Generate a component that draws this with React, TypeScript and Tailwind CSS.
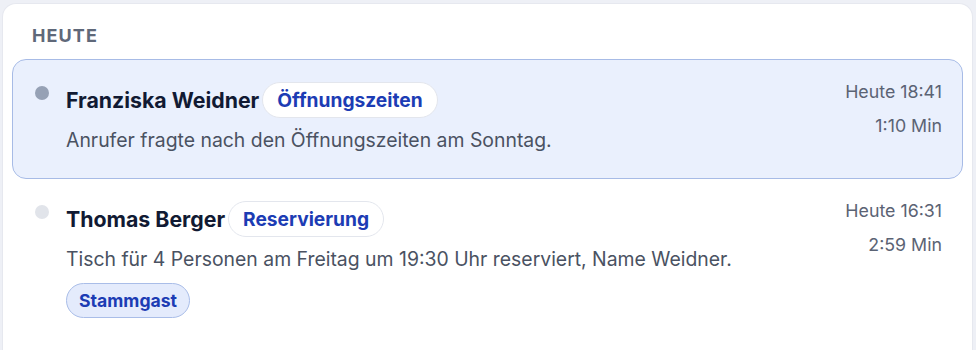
const calls = [
  {
    id: 1,
    name: "Franziska Weidner",
    topic: "Öffnungszeiten",
    summary: "Anrufer fragte nach den Öffnungszeiten am Sonntag.",
    time: "Heute 18:41",
    duration: "1:10 Min",
    tags: [] as string[],
    active: true,
  },
  {
    id: 2,
    name: "Thomas Berger",
    topic: "Reservierung",
    summary: "Tisch für 4 Personen am Freitag um 19:30 Uhr reserviert, Name Weidner.",
    time: "Heute 16:31",
    duration: "2:59 Min",
    tags: ["Stammgast"],
    active: false,
  },
];

export default function App() {
  return (
    <div className="flex h-screen flex-col bg-[#eef0f6] pl-[2px] pr-[3px] pt-[3px] font-['Inter',sans-serif]">
      <section className="flex-1 overflow-hidden rounded-t-[14px] border border-b-0 border-[#e6e8ef] bg-white px-[9px] pt-[20px]">
        <h3 className="pl-5 text-[18px] font-bold uppercase leading-[24px] tracking-[0.06em] text-[#5f6879]">
          Heute
        </h3>
        <div className="mt-[11px] flex flex-col">
          {calls.map((call) => (
            <article
              key={call.id}
              className={
                call.active
                  ? "flex rounded-[14px] border border-[#a7bbe6] bg-[#eaf0fd] pb-[26px] pl-[22px] pr-5 pt-[22px]"
                  : "flex rounded-[14px] border border-transparent pb-[26px] pl-[22px] pr-5 pt-[21px]"
              }
            >
              <span
                className={
                  call.active
                    ? "mt-[4px] h-[14px] w-[14px] shrink-0 rounded-full bg-[#96a1b5]"
                    : "mt-[4px] h-[14px] w-[14px] shrink-0 rounded-full bg-[#e1e4ea]"
                }
              />
              <div className="ml-[17px] flex-1">
                <div className="flex items-center gap-[3px]">
                  <span className="text-[21.3px] font-bold leading-[26px] text-[#111a33]">{call.name}</span>
                  <span className="rounded-full border border-[#e3e6ed] bg-white px-[14px] py-[4px] text-[19.2px] font-bold leading-[26px] text-[#1c3cb4]">
                    {call.topic}
                  </span>
                </div>
                <p className="mt-[10px] text-[19.4px] leading-[24px] text-[#4a5262]">{call.summary}</p>
                {call.tags.length > 0 && (
                  <div className="mt-[12px] flex gap-2">
                    {call.tags.map((tag) => (
                      <span
                        key={tag}
                        className="rounded-full border border-[#a9bde8] bg-[#e4ebfc] px-3 py-[4px] text-[17.6px] font-bold leading-[25px] text-[#1c3cb4]"
                      >
                        {tag}
                      </span>
                    ))}
                  </div>
                )}
              </div>
              <div className="flex flex-col items-end text-[17.8px] leading-[24px] text-[#5b6374]">
                <span className="mt-[-2px]">{call.time}</span>
                <span className="mt-[10px]">{call.duration}</span>
              </div>
            </article>
          ))}
        </div>
      </section>
    </div>
  );
}
